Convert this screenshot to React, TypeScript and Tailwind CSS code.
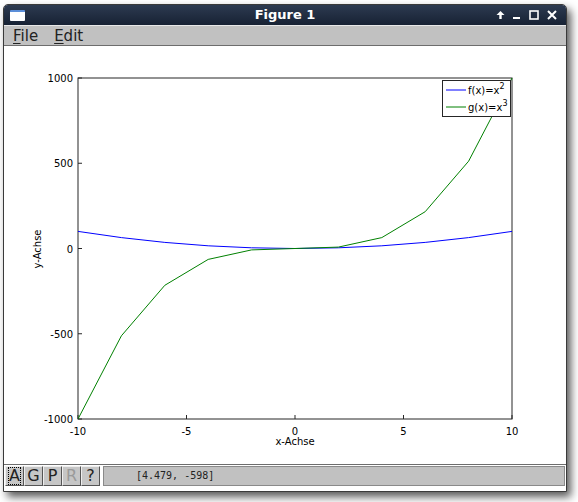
import React from "react";

const X0 = 78;
const X1 = 512;
const Y0 = 419; // y = -1000
const Y1 = 78; // y = 1000

const sx = (x: number) => X0 + ((x + 10) / 20) * (X1 - X0);
const sy = (y: number) => Y0 - ((y + 1000) / 2000) * (Y0 - Y1);

const xs = [-10, -8, -6, -4, -2, 0, 2, 4, 6, 8, 10];
const pts = (f: (x: number) => number) =>
  xs.map((x) => `${sx(x).toFixed(1)},${sy(f(x)).toFixed(1)}`).join(" ");

function Plot() {
  const xticks = [-10, -5, 0, 5, 10];
  const yticks = [-1000, -500, 0, 500, 1000];
  return (
    <svg width="562" height="418" viewBox="4 46 562 418" className="block">
      <rect x="4" y="46" width="562" height="418" fill="#ffffff" />
      <rect x={X0} y={Y1} width={X1 - X0} height={Y0 - Y1} fill="none" stroke="#262626" strokeWidth="1" />
      {xticks.map((t) => (
        <g key={"x" + t}>
          <line x1={sx(t)} x2={sx(t)} y1={Y0} y2={Y0 - 4} stroke="#262626" />
          <text x={sx(t)} y={Y0 + 16} textAnchor="middle" fontSize="10" fill="#000">
            {t}
          </text>
        </g>
      ))}
      {yticks.map((t) => (
        <g key={"y" + t}>
          <line x1={X0} x2={X0 + 4} y1={sy(t)} y2={sy(t)} stroke="#262626" />
          <text x={X0 - 5} y={sy(t) + 4} textAnchor="end" fontSize="10" fill="#000">
            {t}
          </text>
        </g>
      ))}
      <text x={sx(0)} y={445} textAnchor="middle" fontSize="10" fill="#000">
        x-Achse
      </text>
      <text x={41} y={249} textAnchor="middle" fontSize="10" fill="#000" transform="rotate(-90 41 249)">
        y-Achse
      </text>
      <svg x={X0} y={Y1} width={X1 - X0 + 1} height={Y0 - Y1 + 1} viewBox={`${X0} ${Y1} ${X1 - X0 + 1} ${Y0 - Y1 + 1}`} overflow="hidden">
        <polyline points={pts((x) => x * x)} fill="none" stroke="#0000ff" strokeWidth="1" />
        <polyline points={pts((x) => x * x * x)} fill="none" stroke="#008000" strokeWidth="1" />
      </svg>
      <rect x="442.5" y="80.5" width="68" height="36" fill="#ffffff" stroke="#262626" />
      <line x1="446" x2="466" y1="90" y2="90" stroke="#0000ff" />
      <text x="468" y="94" fontSize="10" fill="#000">
        f(x)=x<tspan dy="-5" fontSize="8">2</tspan>
      </text>
      <line x1="446" x2="466" y1="107" y2="107" stroke="#008000" />
      <text x="468" y="111" fontSize="10" fill="#000">
        g(x)=x<tspan dy="-5" fontSize="8">3</tspan>
      </text>
    </svg>
  );
}

function ToolButton({ label, focus, disabled }: { label: string; focus?: boolean; disabled?: boolean }) {
  return (
    <div className="w-[19px] h-[20px] shrink-0 bg-[#c6c6c6] border-t border-l border-t-[#eeeeee] border-l-[#eeeeee] border-b border-r border-b-[#555] border-r-[#555] flex items-center justify-center">
      <span
        className={
          "text-[16px] leading-[16px] " +
          (disabled ? "text-[#9a9a9a] " : "text-[#222] ") +
          (focus ? "outline outline-1 outline-dotted outline-black" : "")
        }
      >
        {label}
      </span>
    </div>
  );
}

export default function App() {
  return (
    <div className="w-[578px] h-[502px] bg-white relative" style={{ fontFamily: '"DejaVu Sans", sans-serif' }}>
      <div className="absolute left-[3px] top-[4px] w-[564px] h-[488px] flex flex-col border border-[#3a3a3a] rounded-t-[5px] shadow-[4px_5px_8px_rgba(0,0,0,0.65)] bg-white overflow-hidden">
        {/* title bar */}
        <div className="h-[20px] bg-gradient-to-b from-[#2d3a50] to-[#172234] flex items-center relative px-[6px]">
          <div className="w-[15px] h-[11px] bg-white border-t-2 border-[#5b8ed8] rounded-[1px]" />
          <div className="absolute inset-0 flex items-center justify-center text-white font-bold text-[13px]">Figure 1</div>
          <div className="ml-auto flex items-center gap-[8px] text-white pr-[3px]">
            <svg width="9" height="10" viewBox="0 0 9 10">
              <path d="M4.5 1 L8.5 5 H5.7 V9 H3.3 V5 H0.5 Z" fill="#fff" />
            </svg>
            <svg width="8" height="10" viewBox="0 0 8 10">
              <rect x="0" y="7" width="7" height="2" fill="#fff" />
            </svg>
            <svg width="10" height="10" viewBox="0 0 10 10">
              <rect x="1" y="1" width="8" height="8" fill="none" stroke="#fff" strokeWidth="1.6" />
            </svg>
            <svg width="10" height="10" viewBox="0 0 10 10">
              <path d="M1 1 L9 9 M9 1 L1 9" stroke="#fff" strokeWidth="2" />
            </svg>
          </div>
        </div>
        {/* menu bar */}
        <div className="h-[21px] bg-[#c1c1c1] border-t border-[#e8e8e8] border-b border-b-[#6d6d6d] flex items-center gap-[16px] px-[9px] pt-[2px] text-[15px] text-[#222]">
          <span>
            <span className="underline underline-offset-[2px]">F</span>ile
          </span>
          <span>
            <span className="underline underline-offset-[2px]">E</span>dit
          </span>
        </div>
        {/* canvas */}
        <div className="h-[418px] bg-white">
          <Plot />
        </div>
        {/* toolbar */}
        <div className="h-[22px] bg-white border-t border-[#6d6d6d] flex items-center pl-[1px] pr-[1px]">
          <ToolButton label="A" focus />
          <ToolButton label="G" />
          <ToolButton label="P" />
          <ToolButton label="R" disabled />
          <ToolButton label="?" />
          <div className="flex-1 h-[20px] ml-[3px] bg-[#c1c1c1] border border-[#8a8a8a] flex items-center pl-[32px] text-[10px] text-[#222]" style={{ fontFamily: '"DejaVu Sans Mono", monospace' }}>
            [4.479, -598]
          </div>
        </div>
        <div className="flex-1 bg-white" />
      </div>
    </div>
  );
}
